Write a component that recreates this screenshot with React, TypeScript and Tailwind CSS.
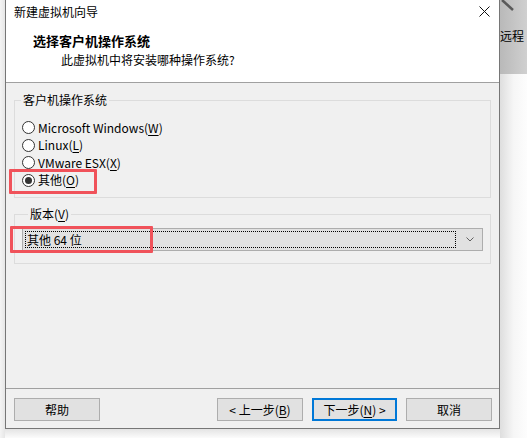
import React from 'react';

const font = { fontFamily: '"Noto Sans CJK SC", "Noto Sans", sans-serif' };

const Radio: React.FC<{ checked?: boolean; label: React.ReactNode }> = ({ checked, label }) => (
  <div className="h-[17.5px] flex items-center pl-[7px]">
    <span className="w-[13px] h-[13px] rounded-full border border-[#333] bg-white flex items-center justify-center shrink-0">
      {checked && <span className="w-[7px] h-[7px] rounded-full bg-[#333]" />}
    </span>
    <span className="ml-[3px] text-[12px] leading-[16px] text-black whitespace-nowrap">{label}</span>
  </div>
);

const Btn: React.FC<{ children: React.ReactNode; primary?: boolean }> = ({ children, primary }) => (
  <button
    className={
      primary
        ? 'w-[85px] h-[23px] bg-[#e1e1e1] border-2 border-[#0078d7] text-[12px] leading-none text-black flex items-center justify-center'
        : 'w-[86px] h-[23px] bg-[#e1e1e1] border border-[#adadad] text-[12px] leading-none text-black flex items-center justify-center'
    }
  >
    {children}
  </button>
);

const U: React.FC<{ children: React.ReactNode }> = ({ children }) => (
  <span className="underline underline-offset-[2px]">{children}</span>
);

export default function App() {
  return (
    <div className="w-[527px] h-[438px] overflow-hidden flex bg-[#fafafa]" style={font}>
      {/* left edge behind the dialog */}
      <div className="w-[5px] h-[438px] bg-gradient-to-r from-[#f4f4f4] to-[#e6e6e6]" />

      <div className="flex flex-col">
        {/* dialog */}
        <div className="w-[495px] h-[429px] border-l border-r border-b border-[#767676] bg-[#f0f0f0] flex flex-col">
          <div className="h-[82px] bg-white border-b border-[#a0a0a0] box-content flex flex-col">
            <div className="h-[23px] flex items-center justify-between pl-[8px] pr-[9px]">
              <span className="text-[12px] text-black leading-[16px]">新建虚拟机向导</span>
              <svg width="11" height="11" viewBox="0 0 11 11">
                <path d="M0.5 0.5 L10.5 10.5 M10.5 0.5 L0.5 10.5" stroke="#111" strokeWidth="1" />
              </svg>
            </div>
            <div className="mt-[10px] pl-[27px] text-[13px] font-bold leading-[16px] text-black">选择客户机操作系统</div>
            <div className="mt-[3px] pl-[55px] text-[12px] leading-[16px] text-black">此虚拟机中将安装哪种操作系统?</div>
          </div>

          <fieldset className="mt-[9px] ml-[8px] mr-[8px] border border-[#dcdcdc] rounded-none pb-[8px] pt-[11px]">
            <legend className="ml-[6px] px-[2px] text-[12px] leading-[16px] text-black">客户机操作系统</legend>
            <div className="flex flex-col">
              <Radio label={<>Microsoft Windows(<U>W</U>)</>} />
              <Radio label={<>Linux(<U>L</U>)</>} />
              <Radio label={<>VMware ESX(<U>X</U>)</>} />
              <div className="relative">
                <Radio checked label={<>其他(<U>O</U>)</>} />
                <span className="absolute left-[-6px] top-[-3px] w-[88px] h-[25px] border-[3px] border-[#f0525a] rounded-[1px]" />
              </div>
            </div>
          </fieldset>

          <fieldset className="mt-[8px] ml-[8px] mr-[8px] border border-[#dcdcdc] pt-[6px] pb-[12px] px-[7px]">
            <legend className="ml-[6px] px-[2px] text-[12px] leading-[16px] text-black">
              版本(<U>V</U>)
            </legend>
            <div className="relative">
              <div className="h-[23px] bg-[#e1e1e1] border border-[#adadad] flex items-center pl-[2px] pr-[8px]">
                <div className="h-[17px] flex-1 border border-dotted border-black flex items-center text-[12px] text-black leading-none pl-[1px]">
                  其他 64 位
                </div>
                <svg className="ml-[10px]" width="8" height="5" viewBox="0 0 8 5">
                  <path d="M0.5 0.5 L4 4 L7.5 0.5" stroke="#606060" strokeWidth="1" fill="none" />
                </svg>
              </div>
              <span className="absolute left-[-12px] top-[-2px] w-[143px] h-[27px] border-[3px] border-[#f0525a] rounded-[1px]" />
            </div>
          </fieldset>

          <div className="flex-1" />

          <div className="h-[40px] border-t border-[#a0a0a0] flex items-start pt-[9px] pl-[8px] pr-[7px]">
            <Btn>帮助</Btn>
            <div className="flex-1" />
            <Btn>&lt; 上一步(<U>B</U>)</Btn>
            <div className="w-[9px]" />
            <Btn primary>下一步(<U>N</U>) &gt;</Btn>
            <div className="w-[9px]" />
            <Btn>取消</Btn>
          </div>
        </div>
        <div className="flex-1 bg-gradient-to-b from-[#e4e4e4] to-[#fbfbfb]" />
      </div>

      {/* window behind, right of the dialog */}
      <div className="flex-1 flex flex-col">
        <div className="h-[74px] bg-gradient-to-r from-[#b9b9b9] to-[#d0d0d0] relative overflow-hidden">
          <svg className="absolute left-0 top-0" width="20" height="14" viewBox="0 0 20 14">
            <path d="M2 0 L13 10" stroke="#5a5a5a" strokeWidth="2.5" />
          </svg>
          <div className="mt-[28px] text-[12px] leading-[16px] text-black whitespace-nowrap">远程</div>
        </div>
        <div className="flex-1 bg-gradient-to-r from-[#dedede] via-[#f6f6f6] to-[#fdfdfd]" />
      </div>
    </div>
  );
}
